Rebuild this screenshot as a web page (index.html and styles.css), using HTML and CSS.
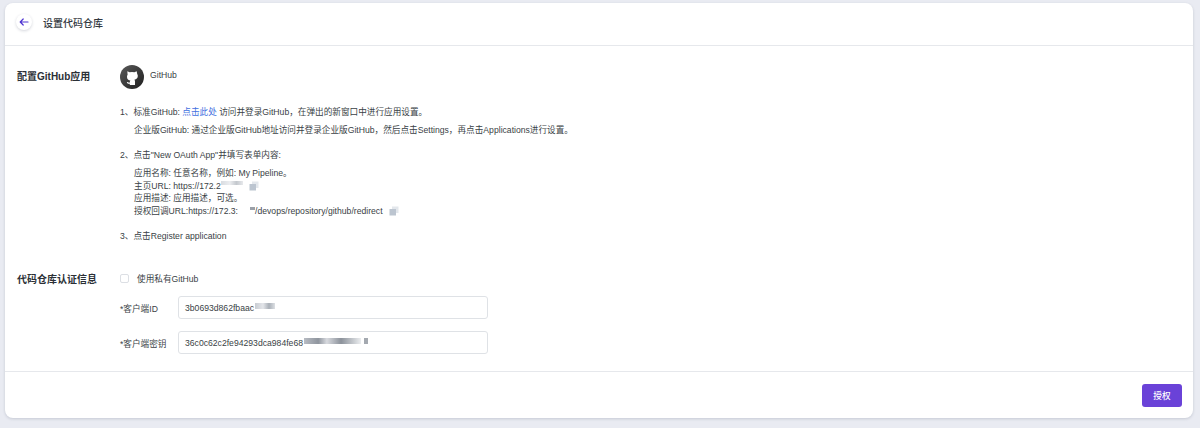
FILE: index.html
```html
<!DOCTYPE html>
<html lang="zh">
<head>
<meta charset="utf-8">
<title>设置代码仓库</title>
<link rel="stylesheet" href="styles.css">
</head>
<body>
<main class="card">
  <header class="head">
    <button class="back" aria-label="返回">
      <svg width="10" height="10" viewBox="0 0 10 10" fill="none" stroke="#4f35d2" stroke-width="1.200" stroke-linecap="round" stroke-linejoin="round"><path d="M9 5H1.200M4.200 2 1.200 5l3 3"/></svg>
    </button>
    <h1 class="title">设置代码仓库</h1>
  </header>
  <div class="content">
    <section class="section app">
      <h2 class="label">配置GitHub应用</h2>
      <div class="body">
        <div class="provider">
          <span class="logo">
            <svg width="24" height="24" viewBox="0 0 24 24" fill="#fff"><path d="M7.300 6.200 9.600 7.300a8 8 0 0 1 4.800 0l2.300-1.100.5 2.700c.5.700.6 1.500.6 2.200 0 2.300-1.500 3.400-3.400 3.700.4.400.6 1 .6 1.600V20H9.800v-1.300c-1.500.3-2.500-.3-3-1.500l1.100-.2c.4.600 1 .8 1.900.6v-.4c0-.6.200-1.200.6-1.600-1.900-.3-3.400-1.400-3.400-3.700 0-.7.100-1.500.6-2.200Z"/></svg>
          </span>
          <span class="provider-name">GitHub</span>
        </div>
        <div class="steps">
          <div class="step">
            <p class="line">1、标准GitHub: <a class="link" href="#">点击此处</a> 访问并登录GitHub，在弹出的新窗口中进行应用设置。</p>
            <p class="line sub">企业版GitHub: 通过企业版GitHub地址访问并登录企业版GitHub，然后点击Settings，再点击Applications进行设置。</p>
          </div>
          <div class="step">
            <p class="line">2、点击"New OAuth App"并填写表单内容:</p>
            <ul class="fields">
              <li>应用名称: 任意名称，例如: My Pipeline。</li>
              <li class="with-icon">主页URL: https://172.2<span class="mask mask-a"></span><svg class="copy copy-a" width="10" height="10" viewBox="0 0 10 10"><rect x="3" y="0.500" width="6.500" height="6.500" fill="#e3e7ec"/><rect x="0.500" y="3" width="6.500" height="6.500" fill="#bcc5d0"/></svg></li>
              <li>应用描述: 应用描述，可选。</li>
              <li class="with-icon">授权回调URL:https://172.3:<span class="gap"></span><span class="mask mask-d"></span>/devops/repository/github/redirect<svg class="copy" width="10" height="10" viewBox="0 0 10 10"><rect x="3" y="0.500" width="6.500" height="6.500" fill="#e3e7ec"/><rect x="0.500" y="3" width="6.500" height="6.500" fill="#bcc5d0"/></svg></li>
            </ul>
          </div>
          <p class="line">3、点击Register application</p>
        </div>
      </div>
    </section>
    <section class="section auth">
      <h2 class="label">代码仓库认证信息</h2>
      <div class="body">
        <label class="check"><span class="box"></span>使用私有GitHub</label>
        <div class="row">
          <span class="row-label">*客户端ID</span>
          <div class="input">3b0693d862fbaac<span class="mask mask-b"></span></div>
        </div>
        <div class="row">
          <span class="row-label">*客户端密钥</span>
          <div class="input">36c0c62c2fe94293dca984fe68<span class="mask mask-c"></span><span class="mask mask-e"></span></div>
        </div>
      </div>
    </section>
  </div>
  <footer class="foot">
    <button class="primary">授权</button>
  </footer>
</main>
</body>
</html>
```
FILE: styles.css
```css
* { box-sizing: border-box; }
html, body { height: 100%; }
body {
  margin: 0;
  padding: 3px 7px 0 5px;
  background: #e9ebf2;
  font-family: "Liberation Sans", "Noto Sans CJK SC", sans-serif;
  color: #3a3f46;
  font-size: 8.65px;
  overflow: hidden;
}
.card {
  height: 415px;
  background: #fff;
  border-radius: 8px;
  box-shadow: 0 1px 3px rgba(40, 50, 80, .18);
  display: flex;
  flex-direction: column;
}
.head {
  height: 43px;
  flex: none;
  display: flex;
  align-items: center;
  gap: 11px;
  padding: 0 0 4px 11px;
  border-bottom: 1px solid #e6e8ec;
}
.back {
  width: 16px;
  height: 16px;
  padding: 0;
  border: 0;
  border-radius: 50%;
  background: #fff;
  box-shadow: 0 1px 3px rgba(40, 50, 80, .2);
  display: flex;
  align-items: center;
  justify-content: center;
}
.title { margin: 0; font-size: 10px; font-weight: 500; color: #33383f; }
.content { flex: 1; padding: 19px 0 0 12px; }
.section { display: flex; }
.label {
  width: 103px;
  flex: none;
  margin: 0;
  font-size: 10px;
  font-weight: 700;
  color: #2b3036;
}
.app .label { padding-top: 3px; }
.auth { margin-top: 29px; }
.provider { display: flex; align-items: center; gap: 6px; height: 24px; }
.logo {
  width: 24px;
  height: 24px;
  border-radius: 50%;
  background: linear-gradient(135deg, #5a5a5a, #1f1f1f);
  display: flex;
  align-items: center;
  justify-content: center;
}
.provider-name { margin-top: -4px; }
.steps { margin-top: 17px; }
.line { margin: 0; line-height: 12px; }
.sub { margin: 6px 0 0 14px; }
.step { margin-bottom: 13px; }
.link { color: #3f6fe0; text-decoration: none; }
.fields { list-style: none; margin: 6px 0 0 14px; padding: 0; line-height: 12.600px; }
.with-icon { display: flex; align-items: center; white-space: pre; }
.copy { margin-left: 6px; }
.copy-a { margin-left: 6px; }
.mask { display: inline-block; height: 6px; background: linear-gradient(90deg, #c8ccd2, #e4e6ea 40%, #aab0b8 70%, #dde0e4); }
.mask-a { width: 22px; height: 4px; margin: -5px 0 0 0; opacity: .7; }
.mask-b { width: 20px; margin: 0 0 4px 1px; }
.mask-c { width: 57px; margin: 0 0 4px 1px; background: linear-gradient(90deg, #b8bcc3, #8f959e 25%, #d8dadf 40%, #8c929b 65%, #eceef0); }
.mask-d { width: 5px; height: 3px; margin-top: -5px; background: #9aa0a8; }
.mask-e { width: 4px; margin: 0 0 4px 3px; background: #a4a9b0; }
.gap { display: inline-block; width: 12px; }
.check { display: flex; align-items: center; gap: 8px; height: 12px; margin-top: 1px; }
.box { width: 9px; height: 9px; border: 1px solid #dcdfe4; border-radius: 2px; }
.row { display: flex; align-items: center; margin-top: 12px; }
.row-label { width: 58px; flex: none; }
.input {
  width: 310px;
  height: 23px;
  padding: 0 6px;
  border: 1px solid #dfe2e6;
  border-radius: 3px;
  display: flex;
  align-items: center;
  color: #3a3f46;
}
.foot {
  height: 47px;
  flex: none;
  border-top: 1px solid #e6e8ec;
  display: flex;
  align-items: center;
  justify-content: flex-end;
  padding: 0 11px 0 0;
}
.primary {
  width: 40px;
  height: 23px;
  padding: 0;
  border: 0;
  border-radius: 3px;
  background: #6a42d8;
  color: #fff;
  font: inherit;
  font-weight: 500;
}
```
